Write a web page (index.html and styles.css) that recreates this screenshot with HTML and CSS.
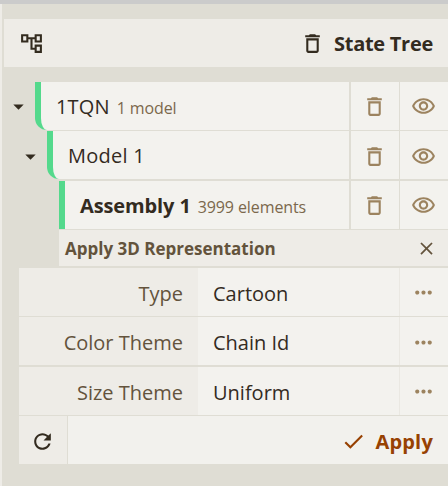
FILE: index.html
```html
<!DOCTYPE html>
<html lang="en">
<head>
<meta charset="utf-8">
<title>State Tree</title>
<link rel="stylesheet" href="styles.css">
</head>
<body>
<svg class="defs" width="0" height="0">
  <symbol id="trash" viewBox="0 0 24 24"><path d="M6 19c0 1.100.9 2 2 2h8c1.100 0 2-.9 2-2V7H6v12zM8 9h8v10H8V9zm7.500-5-1-1h-5l-1 1H5v2h14V4h-3.500z"/></symbol>
  <symbol id="eye" viewBox="0 0 24 24"><path d="M12 6c3.790 0 7.170 2.130 8.820 5.500C19.170 14.870 15.790 17 12 17s-7.170-2.130-8.820-5.500C4.830 8.130 8.210 6 12 6m0-2C7 4 2.730 7.110 1 11.500 2.730 15.890 7 19 12 19s9.270-3.110 11-7.500C21.270 7.110 17 4 12 4zm0 5c1.380 0 2.500 1.120 2.500 2.500S13.380 14 12 14s-2.500-1.120-2.500-2.500S10.620 9 12 9m0-2c-2.480 0-4.500 2.020-4.500 4.500S9.520 16 12 16s4.500-2.020 4.500-4.500S14.480 7 12 7z"/></symbol>
  <symbol id="dots" viewBox="0 0 24 24"><path d="M6 10c-1.100 0-2 .9-2 2s.9 2 2 2 2-.9 2-2-.9-2-2-2zm12 0c-1.100 0-2 .9-2 2s.9 2 2 2 2-.9 2-2-.9-2-2-2zm-6 0c-1.100 0-2 .9-2 2s.9 2 2 2 2-.9 2-2-.9-2-2-2z"/></symbol>
  <symbol id="arrow" viewBox="0 0 24 24"><path d="m7 10 5 5 5-5z"/></symbol>
</svg>
<div class="panel">
  <header class="header">
    <svg class="icon" viewBox="0 0 24 24"><path d="M22 11V3h-7v3H9V3H2v8h7V8h2v10h4v3h7v-8h-7v3h-2V8h2v3h7zM7 9H4V5h3v4zm10 6h3v4h-3v-4zm0-10h3v4h-3V5z"/></svg>
    <div class="title"><svg class="icon"><use href="#trash"/></svg><span class="t-title">State Tree</span></div>
  </header>
  <div class="tree">
    <div class="node level1">
      <svg class="icon toggle"><use href="#arrow"/></svg>
      <div class="label rounded"><span class="t-tqn">1TQN</span><small class="t-model">1 model</small></div>
      <button><svg class="icon"><use href="#trash"/></svg></button><button><svg class="icon"><use href="#eye"/></svg></button>
    </div>
    <div class="node level2">
      <svg class="icon toggle"><use href="#arrow"/></svg>
      <div class="label rounded"><span class="t-model1">Model 1</span></div>
      <button><svg class="icon"><use href="#trash"/></svg></button><button><svg class="icon"><use href="#eye"/></svg></button>
    </div>
    <div class="node level3">
      <div class="label"><b class="t-assembly">Assembly 1</b><small class="t-elements">3999 elements</small></div>
      <button><svg class="icon"><use href="#trash"/></svg></button><button><svg class="icon"><use href="#eye"/></svg></button>
    </div>
  </div>
  <div class="action"><b class="t-action">Apply 3D Representation</b><svg class="icon close" viewBox="0 0 24 24"><path d="M19 6.410 17.590 5 12 10.590 6.410 5 5 6.410 10.590 12 5 17.590 6.410 19 12 13.410 17.590 19 19 17.590 13.410 12z"/></svg></div>
  <div class="params">
    <div class="param"><div class="name"><span class="t-type">Type</span></div><div class="value"><span class="t-cartoon">Cartoon</span></div><button><svg class="icon"><use href="#dots"/></svg></button></div>
    <div class="param"><div class="name"><span class="t-color">Color Theme</span></div><div class="value"><span class="t-chain">Chain Id</span></div><button><svg class="icon"><use href="#dots"/></svg></button></div>
    <div class="param"><div class="name"><span class="t-size">Size Theme</span></div><div class="value"><span class="t-uniform">Uniform</span></div><button><svg class="icon"><use href="#dots"/></svg></button></div>
  </div>
  <footer class="footer">
    <button class="reload"><svg class="icon" viewBox="0 0 24 24"><path d="M17.650 6.350C16.200 4.900 14.210 4 12 4c-4.420 0-7.990 3.580-7.990 8s3.570 8 7.990 8c3.730 0 6.840-2.550 7.730-6h-2.080c-.82 2.330-3.040 4-5.650 4-3.310 0-6-2.690-6-6s2.690-6 6-6c1.660 0 3.140.69 4.220 1.780L13 11h7V4l-2.350 2.350z"/></svg></button>
    <button class="apply"><svg class="icon" viewBox="0 0 24 24"><path d="M9 16.170 4.830 12l-1.420 1.410L9 19 21 7l-1.410-1.410z"/></svg><span class="t-apply">Apply</span></button>
  </footer>
</div>
</body>
</html>
```
FILE: styles.css
```css
* { box-sizing: border-box; }
body {
  margin: 0;
  height: 486px;
  overflow: hidden;
  background: #dfddd4;
  border-top: 4px solid #cbcbcb;
  font-family: "Open Sans", "Noto Sans", sans-serif;
  font-size: 20px;
  line-height: 28px;
  color: #332b1f;
}
.defs { position: absolute; }
.panel { height: 482px; border-left: 2px solid #eeece7; padding: 15px 0 0 2px; }
.icon { width: 25px; height: 25px; fill: currentColor; flex: none; display: block; }
span, b, small { white-space: nowrap; }
span, b { padding-top: 2px; }
b { font-weight: 700; }
button { border: 0; padding: 0; font: inherit; display: flex; align-items: center; justify-content: center; }

.header { height: 48px; background: #eeece7; display: flex; align-items: center; justify-content: space-between; padding: 0 15px; }
.title { display: flex; align-items: center; gap: 9px; font-weight: 700; }
.t-title { letter-spacing: -0.28px; }

.tree { padding-top: 15px; }
.node { display: grid; height: 48px; grid-template-columns: 31px 1fr 49px 48px; margin-bottom: 1px; }
.level2 { grid-template-columns: 43px 1fr 49px 48px; margin-bottom: 2px; }
.level3 { grid-template-columns: 55px 1fr 49px 48px; }
.level3 .label { grid-column: 2; }
.toggle { align-self: center; justify-self: end; margin-right: 4px; }
.level2 .toggle, .level2 .icon { margin-top: 2px; }
.label { background: #f3f2ee; border-left: 6px solid #54d98c; padding-left: 15px; margin-right: 2px; display: flex; align-items: center; }
.rounded { border-bottom-left-radius: 12px; }
.node button { background: #f3f2ee; color: #9c835f; margin-right: 1px; padding-right: 1px; }
.node button:last-child { border-left: 1px solid #dfddd4; margin: 0 0 0 -1px; padding-right: 2px; }
small { font-size: 16px; color: #7b684c; margin-left: 7px; padding-top: 4px; }
.t-tqn { letter-spacing: 0.15px; }
.t-model { letter-spacing: -0.1px; }
.t-model1 { letter-spacing: 0.25px; }
.t-assembly { letter-spacing: -0.12px; }
.t-elements { letter-spacing: -0.1px; }

.action { height: 36px; margin: 0 0 2px 55px; background: #eeece7; padding: 0 11px 0 6px; display: flex; align-items: center; justify-content: space-between; font-size: 17px; color: #63533c; }
.close { width: 21px; height: 21px; }
.params { margin-left: 15px; }
.param { height: 48px; margin-bottom: 1px; display: grid; grid-template-columns: 179px 1fr 49px; }
.param:nth-child(2) { margin-bottom: 2px; }
.param:nth-child(2) .icon { margin-top: 1px; }
.name { background: #eeece7; color: #63533c; display: flex; align-items: center; justify-content: flex-end; padding: 1px 15px 0 0; }
.value { background: #f3f2ee; padding: 1px 0 0 15px; display: flex; align-items: center; }
.param button { background: #f3f2ee; border-left: 1px solid #eae8e2; color: #9c835f; padding: 1px 2px 0 0; }
.footer { height: 48px; margin-left: 15px; display: grid; grid-template-columns: 48px 1fr; gap: 1px; }
.reload { background: #eeece7; color: #332b1f; padding: 2px 1px 0 0; }
.apply { background: #f2f1ed; color: #974102; font-weight: 700; justify-content: flex-end; padding: 2px 15px 0 0; gap: 9px; }
.t-apply { letter-spacing: 0.2px; }
```
